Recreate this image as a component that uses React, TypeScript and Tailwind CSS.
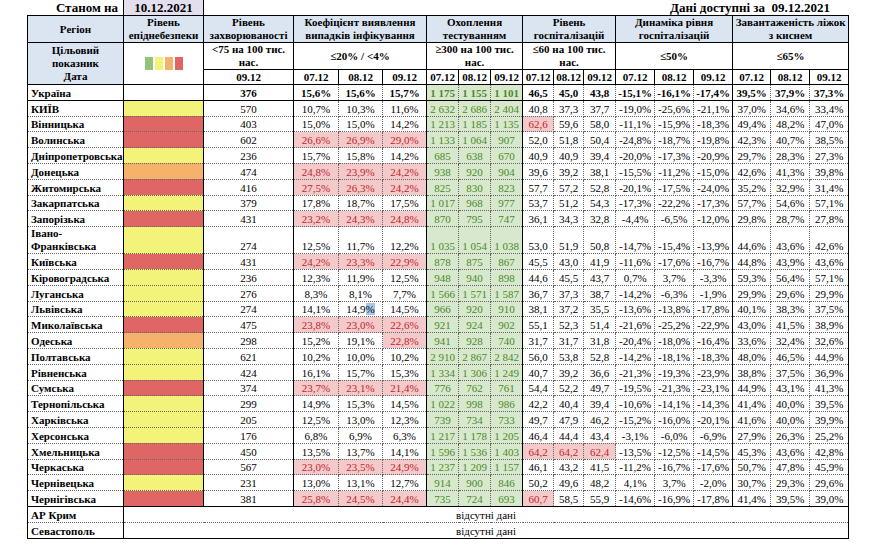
type Row = {
  name: string
  epid: 'y' | 'r' | 'o' | ''
  zahv: string
  koef: string[]
  test: string[]
  hosp: string[]
  dyn: string[]
  load: string[]
  tall?: boolean
}

// "*" at the end of a value marks a cell that misses the target (pink + red text)
const rows: Row[] = [
  { name: 'КИЇВ', epid: 'y', zahv: '570', koef: ['10,7%', '10,3%', '11,6%'], test: ['2 632', '2 686', '2 404'], hosp: ['40,8', '37,3', '37,7'], dyn: ['-19,0%', '-25,6%', '-21,1%'], load: ['37,0%', '34,6%', '33,4%'] },
  { name: 'Вінницька', epid: 'r', zahv: '403', koef: ['15,0%', '15,0%', '14,2%'], test: ['1 213', '1 185', '1 135'], hosp: ['62,6*', '59,6', '58,0'], dyn: ['-11,1%', '-15,9%', '-18,3%'], load: ['49,4%', '48,2%', '47,0%'] },
  { name: 'Волинська', epid: 'r', zahv: '602', koef: ['26,6%*', '26,9%*', '29,0%*'], test: ['1 133', '1 064', '907'], hosp: ['52,0', '51,8', '50,4'], dyn: ['-24,8%', '-18,7%', '-19,8%'], load: ['42,3%', '40,7%', '38,5%'] },
  { name: 'Дніпропетровська', epid: 'y', zahv: '236', koef: ['15,7%', '15,8%', '14,2%'], test: ['685', '638', '670'], hosp: ['40,9', '40,9', '39,4'], dyn: ['-20,0%', '-17,3%', '-20,9%'], load: ['29,7%', '28,3%', '27,3%'] },
  { name: 'Донецька', epid: 'o', zahv: '474', koef: ['24,8%*', '23,9%*', '24,2%*'], test: ['938', '920', '904'], hosp: ['39,6', '39,2', '38,1'], dyn: ['-15,5%', '-11,2%', '-15,0%'], load: ['42,6%', '41,3%', '39,8%'] },
  { name: 'Житомирська', epid: 'r', zahv: '416', koef: ['27,5%*', '26,3%*', '24,2%*'], test: ['825', '830', '823'], hosp: ['57,7', '57,2', '52,8'], dyn: ['-20,1%', '-17,5%', '-24,0%'], load: ['35,2%', '32,9%', '31,4%'] },
  { name: 'Закарпатська', epid: 'y', zahv: '379', koef: ['17,8%', '18,7%', '17,5%'], test: ['1 017', '968', '977'], hosp: ['53,7', '51,2', '54,3'], dyn: ['-17,3%', '-22,2%', '-17,3%'], load: ['57,7%', '54,6%', '57,1%'] },
  { name: 'Запорізька', epid: 'r', zahv: '431', koef: ['23,2%*', '24,3%*', '24,8%*'], test: ['870', '795', '747'], hosp: ['36,1', '34,3', '32,8'], dyn: ['-4,4%', '-6,5%', '-12,0%'], load: ['29,8%', '28,7%', '27,8%'] },
  { name: 'Івано-Франківська', epid: 'y', zahv: '274', koef: ['12,5%', '11,7%', '12,2%'], test: ['1 035', '1 054', '1 038'], hosp: ['53,0', '51,9', '50,8'], dyn: ['-14,7%', '-15,4%', '-13,9%'], load: ['44,6%', '43,6%', '42,6%'], tall: true },
  { name: 'Київська', epid: 'r', zahv: '431', koef: ['24,2%*', '23,3%*', '22,9%*'], test: ['878', '875', '867'], hosp: ['45,5', '43,0', '41,9'], dyn: ['-11,6%', '-17,6%', '-16,7%'], load: ['44,8%', '43,9%', '43,6%'] },
  { name: 'Кіровоградська', epid: 'y', zahv: '236', koef: ['12,3%', '11,9%', '12,5%'], test: ['948', '940', '898'], hosp: ['44,6', '45,5', '43,7'], dyn: ['0,7%', '3,7%', '-3,3%'], load: ['59,3%', '56,4%', '57,1%'] },
  { name: 'Луганська', epid: 'y', zahv: '276', koef: ['8,3%', '8,1%', '7,7%'], test: ['1 566', '1 571', '1 587'], hosp: ['36,7', '37,3', '38,7'], dyn: ['-14,2%', '-6,3%', '-1,9%'], load: ['29,9%', '29,6%', '29,9%'] },
  { name: 'Львівська', epid: 'y', zahv: '274', koef: ['14,1%', '14,9%~', '14,5%'], test: ['966', '920', '910'], hosp: ['38,1', '37,2', '35,5'], dyn: ['-13,6%', '-13,8%', '-17,8%'], load: ['40,1%', '38,3%', '37,5%'] },
  { name: 'Миколаївська', epid: 'r', zahv: '475', koef: ['23,8%*', '23,0%*', '22,6%*'], test: ['921', '924', '902'], hosp: ['55,1', '52,3', '51,4'], dyn: ['-21,6%', '-25,2%', '-22,9%'], load: ['43,0%', '41,5%', '38,9%'] },
  { name: 'Одеська', epid: 'o', zahv: '298', koef: ['15,2%', '19,1%', '22,8%*'], test: ['941', '928', '740'], hosp: ['31,7', '31,7', '31,8'], dyn: ['-20,4%', '-18,0%', '-16,4%'], load: ['33,6%', '32,4%', '32,6%'] },
  { name: 'Полтавська', epid: 'y', zahv: '621', koef: ['10,2%', '10,0%', '10,2%'], test: ['2 910', '2 867', '2 842'], hosp: ['56,0', '53,8', '52,8'], dyn: ['-14,2%', '-18,1%', '-18,3%'], load: ['48,0%', '46,5%', '44,9%'] },
  { name: 'Рівненська', epid: 'y', zahv: '424', koef: ['16,1%', '15,7%', '15,3%'], test: ['1 334', '1 306', '1 249'], hosp: ['40,7', '39,2', '36,6'], dyn: ['-21,3%', '-19,3%', '-23,9%'], load: ['38,8%', '37,5%', '36,9%'] },
  { name: 'Сумська', epid: 'r', zahv: '374', koef: ['23,7%*', '23,1%*', '21,4%*'], test: ['776', '762', '761'], hosp: ['54,4', '52,2', '49,7'], dyn: ['-19,5%', '-21,3%', '-23,1%'], load: ['44,9%', '43,1%', '41,3%'] },
  { name: 'Тернопільська', epid: 'y', zahv: '299', koef: ['14,9%', '15,3%', '14,5%'], test: ['1 022', '998', '986'], hosp: ['42,2', '40,4', '39,4'], dyn: ['-10,6%', '-14,1%', '-14,3%'], load: ['41,4%', '40,0%', '39,5%'] },
  { name: 'Харківська', epid: 'y', zahv: '205', koef: ['12,5%', '13,0%', '12,3%'], test: ['739', '734', '733'], hosp: ['49,7', '47,9', '46,2'], dyn: ['-15,2%', '-16,0%', '-20,1%'], load: ['41,6%', '40,0%', '39,9%'] },
  { name: 'Херсонська', epid: 'y', zahv: '176', koef: ['6,8%', '6,9%', '6,3%'], test: ['1 217', '1 178', '1 205'], hosp: ['46,4', '44,4', '43,4'], dyn: ['-3,1%', '-6,0%', '-6,9%'], load: ['27,9%', '26,3%', '25,2%'] },
  { name: 'Хмельницька', epid: 'r', zahv: '450', koef: ['13,5%', '13,7%', '14,1%'], test: ['1 596', '1 536', '1 403'], hosp: ['64,2*', '64,2*', '62,4*'], dyn: ['-13,5%', '-12,5%', '-14,5%'], load: ['45,3%', '43,6%', '42,8%'] },
  { name: 'Черкаська', epid: 'r', zahv: '567', koef: ['23,0%*', '23,5%*', '24,9%*'], test: ['1 237', '1 209', '1 157'], hosp: ['46,1', '43,2', '41,5'], dyn: ['-11,2%', '-16,7%', '-17,6%'], load: ['50,7%', '47,8%', '45,9%'] },
  { name: 'Чернівецька', epid: 'y', zahv: '231', koef: ['13,0%', '13,1%', '12,7%'], test: ['914', '900', '846'], hosp: ['50,2', '49,6', '48,2'], dyn: ['4,1%', '3,7%', '-2,0%'], load: ['30,7%', '29,3%', '29,6%'] },
  { name: 'Чернігівська', epid: 'r', zahv: '381', koef: ['25,8%*', '24,5%*', '24,4%*'], test: ['735', '724', '693'], hosp: ['60,7*', '58,5', '55,9'], dyn: ['-14,6%', '-16,9%', '-17,8%'], load: ['41,4%', '39,5%', '39,0%'] },
]

const epidBg = {
  y: 'bg-[#f3f379]',
  r: 'bg-[#e06666]',
  o: 'bg-[#f6b26b]',
  '': '',
}

const cell = 'border border-dotted border-[#666666] p-0 text-center align-bottom whitespace-nowrap leading-[13px]'
const head = 'border border-black bg-[#dbe5f1] p-0 text-center font-bold leading-[13px]'
const sub = 'border border-black p-0 text-center font-bold leading-[13px]'
const bad = 'bg-[#f4c9c9] text-[#c0262d]'

function Value({ v }: { v: string }) {
  if (v.endsWith('~')) {
    // a selected "%" in the source sheet
    return (
      <>
        {v.slice(0, -2)}
        <span className="bg-[#a8c6ea]">%</span>
      </>
    )
  }
  return <>{v.replace('*', '')}</>
}

function Cells({ values, extra = '' }: { values: string[]; extra?: string }) {
  return (
    <>
      {values.map((v, i) => (
        <td key={i} className={`${cell} ${v.endsWith('*') ? bad : extra}`}>
          <Value v={v} />
        </td>
      ))}
    </>
  )
}

export default function App() {
  return (
    <div className="w-[883px] h-[555px] bg-white text-black text-[11px] leading-[13px] font-['Liberation_Serif',serif] pl-[27px]">
      {/* title line */}
      <div className="flex h-[15px] items-end font-bold text-[13px] leading-[15px]">
        <div className="w-[96px] text-right pr-[5px]">Станом на</div>
        <div className="w-[81px] h-[15px] bg-[#e4dfec] border-x border-black text-center">10.12.2021</div>
        <div className="w-[626px] text-right">Дані доступні за&nbsp; 09.12.2021</div>
      </div>

      <table className="w-[821px] table-fixed border-collapse border border-black">
        <colgroup className="border-x border-black">
          <col className="w-[96px]" />
        </colgroup>
        <colgroup className="border-x border-black">
          <col className="w-[80px]" />
        </colgroup>
        <colgroup className="border-x border-black">
          <col className="w-[90px]" />
        </colgroup>
        <colgroup className="border-x border-black">
          <col className="w-[45px]" />
          <col className="w-[44px]" />
          <col className="w-[44px]" />
        </colgroup>
        <colgroup className="border-x border-black">
          <col className="w-[32px]" />
          <col className="w-[32px]" />
          <col className="w-[32px]" />
        </colgroup>
        <colgroup className="border-x border-black">
          <col className="w-[31px]" />
          <col className="w-[30px]" />
          <col className="w-[32px]" />
          <col className="w-[39px]" />
          <col className="w-[39px]" />
          <col className="w-[39px]" />
        </colgroup>
        <colgroup className="border-x border-black">
          <col className="w-[38px]" />
          <col className="w-[39px]" />
          <col className="w-[39px]" />
        </colgroup>

        <thead>
          <tr className="h-[26px]">
            <th className={head}>Регіон</th>
            <th className={head}>Рівень<br />епіднебезпеки</th>
            <th className={head}>Рівень<br />захворюваності</th>
            <th colSpan={3} className={head}>Коефіцієнт виявлення<br />випадків інфікування</th>
            <th colSpan={3} className={head}>Охоплення<br />тестуванням</th>
            <th colSpan={3} className={head}>Рівень<br />госпіталізацій</th>
            <th colSpan={3} className={head}>Динаміка рівня<br />госпіталізацій</th>
            <th colSpan={3} className={head}>Завантаженість ліжок<br />з киснем</th>
          </tr>
          <tr className="h-[26px]">
            <th rowSpan={2} className={head}>
              Цільовий<br />показник<br />Дата
            </th>
            <th rowSpan={2} className={sub}>
              <div className="flex justify-center gap-[2px]">
                <span className="w-[8px] h-[13px] bg-[#93c47d]" />
                <span className="w-[8px] h-[13px] bg-[#f3f379]" />
                <span className="w-[8px] h-[13px] bg-[#f6b26b]" />
                <span className="w-[8px] h-[13px] bg-[#e06666]" />
              </div>
            </th>
            <th className={sub}>&lt;75 на 100 тис.<br />нас.</th>
            <th colSpan={3} className={sub}>≤20% / &lt;4%</th>
            <th colSpan={3} className={sub}>≥300 на 100 тис.<br />нас.</th>
            <th colSpan={3} className={sub}>≤60 на 100 тис.<br />нас.</th>
            <th colSpan={3} className={sub}>≤50%</th>
            <th colSpan={3} className={sub}>≤65%</th>
          </tr>
          <tr className="h-[15px]">
            <th className={sub}>09.12</th>
            {['07.12', '08.12', '09.12', '07.12', '08.12', '09.12', '07.12', '08.12', '09.12', '07.12', '08.12', '09.12', '07.12', '08.12', '09.12'].map((d, i) => (
              <th key={i} className={sub}>{d}</th>
            ))}
          </tr>
        </thead>

        <tbody>
          <tr className="h-[15.8px] font-bold border-b border-black">
            <td className={`${cell} text-left pl-[3px]`}>Україна</td>
            <td className={cell} />
            <td className={cell}>376</td>
            <Cells values={['15,6%', '15,6%', '15,7%']} />
            <Cells values={['1 175', '1 155', '1 101']} extra="bg-[#d8e8cd] text-[#4a8a2a]" />
            <Cells values={['46,5', '45,0', '43,8']} />
            <Cells values={['-15,1%', '-16,1%', '-17,4%']} />
            <Cells values={['39,5%', '37,9%', '37,3%']} />
          </tr>

          {rows.map((r, i) => (
            <tr
              key={r.name}
              className={`${r.tall ? 'h-[24px]' : 'h-[15.8px]'} ${i === rows.length - 1 ? 'border-b border-black' : ''}`}
            >
              <td className={`${cell} text-left pl-[3px] font-bold ${r.tall ? 'leading-[12px]' : ''}`}>
                {r.tall ? (
                  <>
                    Івано-
                    <br />
                    Франківська
                  </>
                ) : (
                  r.name
                )}
              </td>
              <td className={`${cell} ${epidBg[r.epid]}`} />
              <td className={cell}>{r.zahv}</td>
              <Cells values={r.koef} />
              <Cells values={r.test} extra="bg-[#d8e8cd] text-[#4a8a2a]" />
              <Cells values={r.hosp} />
              <Cells values={r.dyn} />
              <Cells values={r.load} />
            </tr>
          ))}

          {['АР Крим', 'Севастополь'].map((n) => (
            <tr key={n} className="h-[15.8px]">
              <td className={`${cell} text-left pl-[3px] font-bold`}>{n}</td>
              <td colSpan={17} className={cell}>
                відсутні дані
              </td>
            </tr>
          ))}
        </tbody>
      </table>
    </div>
  )
}
